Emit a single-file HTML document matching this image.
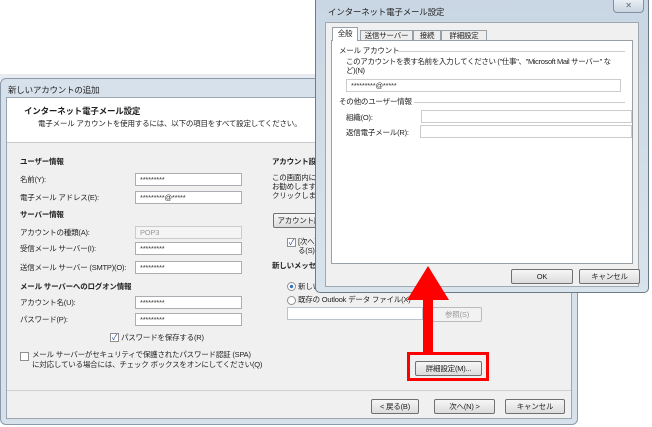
<!DOCTYPE html>
<html><head><meta charset="utf-8"><style>
*{margin:0;padding:0;box-sizing:border-box}
body{width:652px;height:427px;overflow:hidden;background:#fff;position:relative;font-family:"Liberation Sans","Noto Sans CJK JP",sans-serif;font-size:7.5px;letter-spacing:-0.2px;color:#222}
.a{position:absolute;white-space:nowrap}
.f{position:absolute;background:#fff;border:1px solid #abadb3;height:13px;font-size:7.5px;line-height:11px;padding-left:4px;color:#333}
.b{position:absolute;border:1px solid #707070;border-radius:2px;background:linear-gradient(#f6f6f6,#dcdcdc);text-align:center;font-size:7.5px;line-height:13px;height:15px}
.h{font-weight:bold}
.cb{position:absolute;width:9px;height:9px;border:1px solid #8f8f8f;background:#fff;font-size:8px;line-height:7px;text-align:center;color:#2a4aa0}
.rd{position:absolute;width:9px;height:9px;border:1px solid #8f8f8f;border-radius:50%;background:#fff}
</style></head><body>
<div class="a" style="left:0;top:74px;width:577px;height:6px;background:#e8ecf0"></div>
<div class="a" style="left:0;top:78px;width:578px;height:347px;background:#d6e1ec;border:1px solid #8a9aab;border-radius:6px"></div>
<div class="a" style="left:8px;top:84px;font-size:8.5px">新しいアカウントの追加</div>
<div class="a" style="left:6px;top:97px;width:566px;height:322px;background:#f0f0f0;border:1px solid #9aa6b2"></div>
<div class="a" style="left:7px;top:98px;width:564px;height:45px;background:#fff;border-bottom:1px solid #c8c8c8"></div>
<div class="a h" style="left:24px;top:105px;font-size:8.5px">インターネット電子メール設定</div>
<div class="a" style="left:38px;top:118px">電子メール アカウントを使用するには、以下の項目をすべて設定してください。</div>
<div class="a h" style="left:20px;top:156px">ユーザー情報</div>
<div class="a" style="left:20px;top:174px">名前(Y):</div><div class="f" style="left:135px;top:173px;width:107px">*********</div>
<div class="a" style="left:20px;top:192px">電子メール アドレス(E):</div><div class="f" style="left:135px;top:191px;width:107px">*********@*****</div>
<div class="a h" style="left:20px;top:209px">サーバー情報</div>
<div class="a" style="left:20px;top:227px">アカウントの種類(A):</div><div class="f" style="left:135px;top:226px;width:107px;background:#f4f4f4;color:#999;border-color:#ccc">POP3</div>
<div class="a" style="left:20px;top:243px">受信メール サーバー(I):</div><div class="f" style="left:135px;top:242px;width:107px">*********</div>
<div class="a" style="left:20px;top:262px">送信メール サーバー (SMTP)(O):</div><div class="f" style="left:135px;top:261px;width:107px">*********</div>
<div class="a h" style="left:20px;top:281px">メール サーバーへのログオン情報</div>
<div class="a" style="left:20px;top:297px">アカウント名(U):</div><div class="f" style="left:135px;top:296px;width:107px">*********</div>
<div class="a" style="left:20px;top:314px">パスワード(P):</div><div class="f" style="left:135px;top:313px;width:107px">*********</div>
<div class="cb" style="left:110px;top:333px">✓</div><div class="a" style="left:121px;top:332px">パスワードを保存する(R)</div>
<div class="cb" style="left:20px;top:352px"></div>
<div class="a" style="left:32px;top:350px;line-height:10px">メール サーバーがセキュリティで保護されたパスワード認証 (SPA)<br>に対応している場合には、チェック ボックスをオンにしてください(Q)</div>
<div class="a h" style="left:272px;top:156px">アカウント設定</div>
<div class="a" style="left:272px;top:173px;line-height:9px">この画面内に情<br>お勧めします。<br>クリックします (</div>
<div class="b" style="left:273px;top:213px;width:60px">アカウント設定</div>
<div class="cb" style="left:287px;top:238px">✓</div><div class="a" style="left:298px;top:237px;line-height:9px">[次へ]<br>る(S)</div>
<div class="a h" style="left:272px;top:260px">新しいメッセージ</div>
<div class="rd" style="left:287px;top:282px;background:radial-gradient(#3a6fc0 30%,#fff 40%)"></div><div class="a" style="left:298px;top:281px">新しい</div>
<div class="rd" style="left:287px;top:296px"></div><div class="a" style="left:298px;top:294px">既存の Outlook データ ファイル(X)</div>
<div class="f" style="left:287px;top:307px;width:136px;border-color:#b8c4d0"></div>
<div class="b" style="left:432px;top:307px;width:50px;color:#999;border-color:#bbb;background:#f2f2f2">参照(S)</div>
<div class="b" style="left:415px;top:361px;width:67px">詳細設定(M)...</div>
<div class="a" style="left:407px;top:352px;width:82px;height:29px;border:3px solid #f00"></div>
<div class="a" style="left:7px;top:390px;width:564px;border-top:1px solid #d0d0d0"></div>
<div class="b" style="left:371px;top:399px;width:48px">&lt; 戻る(B)</div>
<div class="b" style="left:434px;top:399px;width:61px">次へ(N) &gt;</div>
<div class="b" style="left:505px;top:399px;width:60px">キャンセル</div>
<div class="a" style="left:315px;top:-4px;width:334px;height:297px;background:linear-gradient(#c9d6e3,#d9e3ec);border:1px solid #6d7a88;border-radius:5px"></div>
<div class="a" style="left:613px;top:0;width:31px;height:13px;border:1px solid #8090a0;border-top:none;border-radius:0 0 4px 4px;background:linear-gradient(#e8eef4,#c8d4e0);text-align:center;font-size:8px;color:#666;line-height:12px">✕</div>
<div class="a" style="left:328px;top:6px;font-size:8.5px">インターネット電子メール設定</div>
<div class="a" style="left:325px;top:22px;width:314px;height:265px;background:#f0f0f0;border:1px solid #a0a8b0"></div>
<div class="a" style="left:331px;top:40px;width:302px;height:224px;background:#fff;border:1px solid #9aa0a8"></div>
<div class="a" style="left:332px;top:27px;width:26px;height:14px;background:#fff;border:1px solid #9aa0a8;border-bottom:none;text-align:center;line-height:12px">全般</div>
<div class="a" style="left:360px;top:30px;width:53px;height:11px;background:#eee;border:1px solid #9aa0a8;text-align:center;line-height:9px">送信サーバー</div>
<div class="a" style="left:413px;top:30px;width:28px;height:11px;background:#eee;border:1px solid #9aa0a8;text-align:center;line-height:9px">接続</div>
<div class="a" style="left:441px;top:30px;width:46px;height:11px;background:#eee;border:1px solid #9aa0a8;text-align:center;line-height:9px">詳細設定</div>
<div class="a" style="left:339px;top:45px">メール アカウント</div>
<div class="a" style="left:398px;top:51px;width:227px;border-top:1px solid #ccc"></div>
<div class="a" style="left:346px;top:57px;line-height:9px;letter-spacing:-0.35px">このアカウントを表す名前を入力してください ("仕事"、"Microsoft Mail サーバー" な<br>ど)(N)</div>
<div class="f" style="left:346px;top:79px;width:275px;border-color:#ccc">*********@*****</div>
<div class="a" style="left:339px;top:96px">その他のユーザー情報</div>
<div class="a" style="left:414px;top:102px;width:211px;border-top:1px solid #ccc"></div>
<div class="a" style="left:346px;top:112px">組織(O):</div><div class="f" style="left:421px;top:110px;width:211px;border-color:#ccc"></div>
<div class="a" style="left:346px;top:127px">返信電子メール(R):</div><div class="f" style="left:420px;top:125px;width:212px;border-color:#ccc"></div>
<div class="b" style="left:511px;top:269px;width:62px">OK</div>
<div class="b" style="left:579px;top:269px;width:61px">キャンセル</div>
<svg class="a" style="left:0;top:0" width="652" height="427"><polygon points="428,266 407,300 449,300" fill="#f00"/><rect x="423" y="298" width="10" height="56" fill="#f00"/></svg>
</body></html>
